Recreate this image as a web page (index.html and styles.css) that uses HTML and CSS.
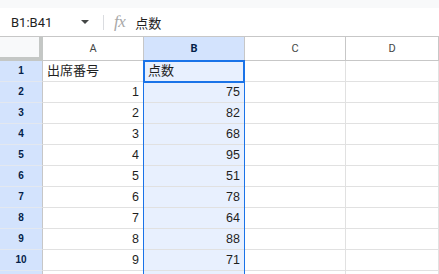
FILE: index.html
```html
<!DOCTYPE html>
<html lang="ja">
<head>
<meta charset="utf-8">
<title>Sheet</title>
<link rel="stylesheet" href="styles.css">
</head>
<body>
<div class="top"></div>
<div class="fbar">
  <div class="namebox"><span class="ref">B1:B41</span><span class="caret"></span></div>
  <div class="sep"></div>
  <div class="fx">fx</div>
  <div class="ftext jp">点数</div>
</div>
<div class="sheet">
  <div class="corner"></div>
  <div class="ch">A</div>
  <div class="ch sel-h">B</div>
  <div class="ch">C</div>
  <div class="ch">D</div>

  <div class="rh">1</div><div class="c jp">出席番号</div><div class="c b jp">点数</div><div class="c"></div><div class="c"></div>
  <div class="rh">2</div><div class="c n">1</div><div class="c b n">75</div><div class="c"></div><div class="c"></div>
  <div class="rh">3</div><div class="c n">2</div><div class="c b n">82</div><div class="c"></div><div class="c"></div>
  <div class="rh">4</div><div class="c n">3</div><div class="c b n">68</div><div class="c"></div><div class="c"></div>
  <div class="rh">5</div><div class="c n">4</div><div class="c b n">95</div><div class="c"></div><div class="c"></div>
  <div class="rh">6</div><div class="c n">5</div><div class="c b n">51</div><div class="c"></div><div class="c"></div>
  <div class="rh">7</div><div class="c n">6</div><div class="c b n">78</div><div class="c"></div><div class="c"></div>
  <div class="rh">8</div><div class="c n">7</div><div class="c b n">64</div><div class="c"></div><div class="c"></div>
  <div class="rh">9</div><div class="c n">8</div><div class="c b n">88</div><div class="c"></div><div class="c"></div>
  <div class="rh">10</div><div class="c n">9</div><div class="c b n">71</div><div class="c"></div><div class="c"></div>
  <div class="rh"></div><div class="c n"></div><div class="c b n"></div><div class="c"></div><div class="c"></div>

  <div class="range"></div>
  <div class="active"></div>
</div>
</body>
</html>
```
FILE: styles.css
```css
html, body {
  margin: 0;
  padding: 0;
  background: #ffffff;
  overflow: hidden;
}
body {
  font-family: "Liberation Sans", Arial, "Noto Sans CJK JP", sans-serif;
  color: #1f1f1f;
  width: 439px;
  height: 274px;
}
.jp {
  font-family: "Liberation Sans", "Noto Sans CJK JP", sans-serif;
}
.top {
  height: 8px;
  background: #f8f9fa;
}
.fbar {
  height: 28px;
  border-bottom: 1px solid #c7c7c7;
  display: flex;
  align-items: center;
}
.namebox {
  width: 92px;
  padding-left: 11px;
  box-sizing: border-box;
  display: flex;
  align-items: center;
}
.ref {
  font-family: Roboto, "Liberation Sans", sans-serif;
  font-size: 13px;
  color: #1f1f1f;
}
.caret {
  margin-left: auto;
  margin-right: 3px;
  width: 0;
  height: 0;
  border-left: 4px solid transparent;
  border-right: 4px solid transparent;
  border-top: 4px solid #444746;
}
.sep {
  width: 1px;
  height: 15px;
  background: #dadce0;
  margin-left: 11px;
}
.fx {
  margin-left: 10px;
  font-family: "Liberation Serif", serif;
  font-style: italic;
  font-size: 17px;
  color: #a8a8a8;
  letter-spacing: -0.5px;
}
.ftext {
  margin-left: 10px;
  font-size: 13px;
  color: #1f1f1f;
}
.sheet {
  position: relative;
  height: 237px;
  overflow: hidden;
  display: grid;
  grid-template-columns: 43px 101px 101px 101px 1fr;
  grid-template-rows: 24px repeat(11, 21px);
}
.sheet > div {
  box-sizing: border-box;
}
.corner {
  background: #f8f9fa;
  border-right: 4px solid #c4c7c5;
  border-bottom: 4px solid #c4c7c5;
}
.ch {
  background: #ffffff;
  border-right: 1px solid #c7c7c7;
  border-bottom: 1px solid #c7c7c7;
  font-family: Roboto, "Liberation Sans", sans-serif;
  font-size: 11px;
  line-height: 23px;
  text-align: center;
  color: #444746;
}
.ch.sel-h {
  background: #d3e3fd;
  color: #041e49;
  font-weight: bold;
}
.rh {
  background: #d3e3fd;
  border-right: 1px solid #c7c7c7;
  border-bottom: 1px solid #e3e8f0;
  font-size: 10px;
  font-weight: bold;
  line-height: 20px;
  text-align: center;
  color: #041e49;
}
.c {
  border-right: 1px solid #e1e1e1;
  border-bottom: 1px solid #e1e1e1;
  font-size: 13px;
  line-height: 20px;
  padding: 0 4px;
  white-space: nowrap;
  overflow: hidden;
}
.c.n {
  text-align: right;
  font-size: 12.5px;
}
.c.b {
  background: #e8f0fe;
}
.range {
  position: absolute;
  left: 143px;
  top: 23px;
  width: 102px;
  bottom: 0;
  border-left: 1px solid #1a73e8;
  border-right: 1px solid #1a73e8;
  box-sizing: border-box;
  pointer-events: none;
}
.active {
  position: absolute;
  left: 143px;
  top: 23px;
  width: 102px;
  height: 23px;
  border: 2px solid #1a73e8;
  box-sizing: border-box;
  pointer-events: none;
}
```
